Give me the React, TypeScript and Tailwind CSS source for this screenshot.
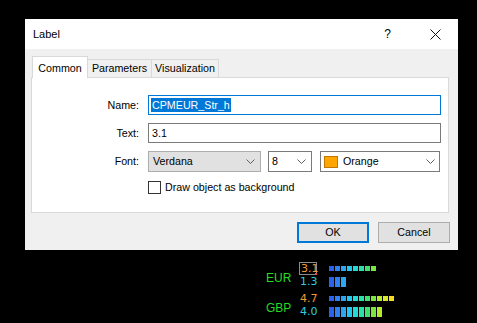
import React from "react";

const GRAD = [
  "bg-[#2a62f0]",
  "bg-[#2f80f4]",
  "bg-[#2aa6f2]",
  "bg-[#22c8ea]",
  "bg-[#20dcd6]",
  "bg-[#28e0a8]",
  "bg-[#3fe070]",
  "bg-[#7ae640]",
  "bg-[#b4ea30]",
  "bg-[#d8ea28]",
  "bg-[#f4dc20]",
];

function Chevron() {
  return (
    <svg width="9" height="5" viewBox="0 0 9 5" className="shrink-0">
      <polyline points="0.5,0.5 4.5,4.5 8.5,0.5" fill="none" stroke="#5f5f5f" strokeWidth="1" />
    </svg>
  );
}

function Bars({ count, tall }: { count: number; tall?: boolean }) {
  return (
    <div className="flex items-center gap-px">
      {GRAD.slice(0, count).map((c, i) => (
        <div key={i} className={`${c} w-[5px] ${tall ? "h-[10px]" : "h-[5px]"}`} />
      ))}
    </div>
  );
}

function IndicatorGroup({
  label,
  top,
  bottom,
  topBars,
  bottomBars,
  boxed,
}: {
  label: string;
  top: string;
  bottom: string;
  topBars: number;
  bottomBars: number;
  boxed?: boolean;
}) {
  return (
    <div className="flex items-center">
      <div className="w-[33px] pt-[6px] text-[12px] leading-[14px] text-[#22dd22]" style={{ fontFamily: '"Liberation Sans", Arial, sans-serif' }}>
        {label}
      </div>
      <div className="flex flex-col" style={{ fontFamily: '"DejaVu Sans", Verdana, sans-serif' }}>
        <div className="flex h-[13px] items-center">
          <div className={`relative flex h-[13px] w-[18px] items-center pl-px text-[11px] leading-none text-[#ee9a33] ${boxed ? "border border-[#8a8a8a]" : ""}`}>
            {top}
            {boxed && <div className="absolute -bottom-px -right-px h-[2px] w-[2px] bg-[#ff4040]" />}
          </div>
          <div className="ml-[12px]">
            <Bars count={topBars} />
          </div>
        </div>
        <div className="flex h-[13px] items-center">
          <div className="flex h-[13px] w-[18px] items-center pl-px text-[11px] leading-none text-[#33ccdd]">{bottom}</div>
          <div className="ml-[12px]">
            <Bars count={bottomBars} tall />
          </div>
        </div>
      </div>
    </div>
  );
}

export default function App() {
  return (
    <div
      className="h-[323px] w-[477px] overflow-hidden bg-black pl-[25px] pt-[19px] text-[10.7px] text-black"
      style={{ fontFamily: '"Liberation Sans", Arial, sans-serif' }}
    >
      <div className="flex h-[231px] w-[433px] flex-col bg-[#f0f0f0]">
        {/* title bar */}
        <div className="flex h-[30px] items-center bg-white pl-[8px]">
          <span className="text-[11px]">Label</span>
          <span className="ml-auto text-[12px]">?</span>
          <svg width="11" height="11" viewBox="0 0 11 11" className="ml-[39px] mr-[17px]">
            <path d="M0.5 0.5 L10.5 10.5 M10.5 0.5 L0.5 10.5" stroke="#111" strokeWidth="1" />
          </svg>
        </div>

        {/* tabs */}
        <div className="ml-[7px] mt-[7px] flex h-[21px] items-end">
          <div className="relative z-10 -mb-px flex h-[22px] w-[56px] items-start justify-center border border-b-0 border-[#d9d9d9] bg-white pt-[3px]">
            Common
          </div>
          <div className="-ml-px flex h-[18px] w-[65px] items-center justify-center border border-b-0 border-[#d9d9d9]">
            Parameters
          </div>
          <div className="-ml-px flex h-[18px] w-[68px] items-center justify-center border border-b-0 border-[#d9d9d9]">
            Visualization
          </div>
        </div>

        {/* panel */}
        <div className="ml-[6px] flex h-[136px] w-[418px] flex-col border border-[#d9d9d9] bg-white pt-[17px]">
          <div className="flex h-[20px] items-center">
            <div className="w-[109px] pr-[2px] text-right">Name:</div>
            <div className="ml-[7px] flex h-[20px] w-[293px] items-center border border-[#0078d7] pl-[2px]">
              <span className="bg-[#0078d7] px-px leading-[14px] text-white">CPMEUR_Str_h</span>
            </div>
          </div>
          <div className="mt-[8px] flex h-[20px] items-center">
            <div className="w-[109px] pr-[2px] text-right">Text:</div>
            <div className="ml-[7px] flex h-[20px] w-[293px] items-center border border-[#7a7a7a] pl-[3px]">3.1</div>
          </div>
          <div className="mt-[8px] flex h-[21px] items-center">
            <div className="w-[109px] pr-[2px] text-right">Font:</div>
            <div className="ml-[7px] flex h-[21px] w-[113px] items-center border border-[#adadad] bg-[#e1e1e1] pl-[4px] pr-[5px]">
              <span className="flex-1">Verdana</span>
              <Chevron />
            </div>
            <div className="ml-[7px] flex h-[21px] w-[44px] items-center border border-[#7a7a7a] bg-white pl-[3px] pr-[5px]">
              <span className="flex-1">8</span>
              <Chevron />
            </div>
            <div className="ml-[8px] flex h-[21px] w-[120px] items-center border border-[#7a7a7a] bg-white pl-[3px] pr-[4px]">
              <div className="h-[12px] w-[14px] border border-[#c07800] bg-[#ffa500]" />
              <span className="ml-[5px] flex-1">Orange</span>
              <Chevron />
            </div>
          </div>
          <div className="mt-[7px] flex items-center pl-[116px]">
            <div className="h-[13px] w-[13px] border border-[#333] bg-white" />
            <span className="ml-[4px]">Draw object as background</span>
          </div>
        </div>

        {/* buttons */}
        <div className="mt-[9px] flex justify-end gap-[9px] pr-[8px]">
          <div className="flex h-[21px] w-[72px] items-center justify-center border-2 border-[#0078d7] bg-[#e1e1e1]">OK</div>
          <div className="flex h-[21px] w-[72px] items-center justify-center border border-[#adadad] bg-[#e1e1e1]">Cancel</div>
        </div>
      </div>

      {/* chart indicator */}
      <div className="ml-[241px] mt-[12px] flex flex-col gap-[4px]">
        <IndicatorGroup label="EUR" top="3.1" bottom="1.3" topBars={8} bottomBars={3} boxed />
        <IndicatorGroup label="GBP" top="4.7" bottom="4.0" topBars={11} bottomBars={9} />
      </div>
    </div>
  );
}
